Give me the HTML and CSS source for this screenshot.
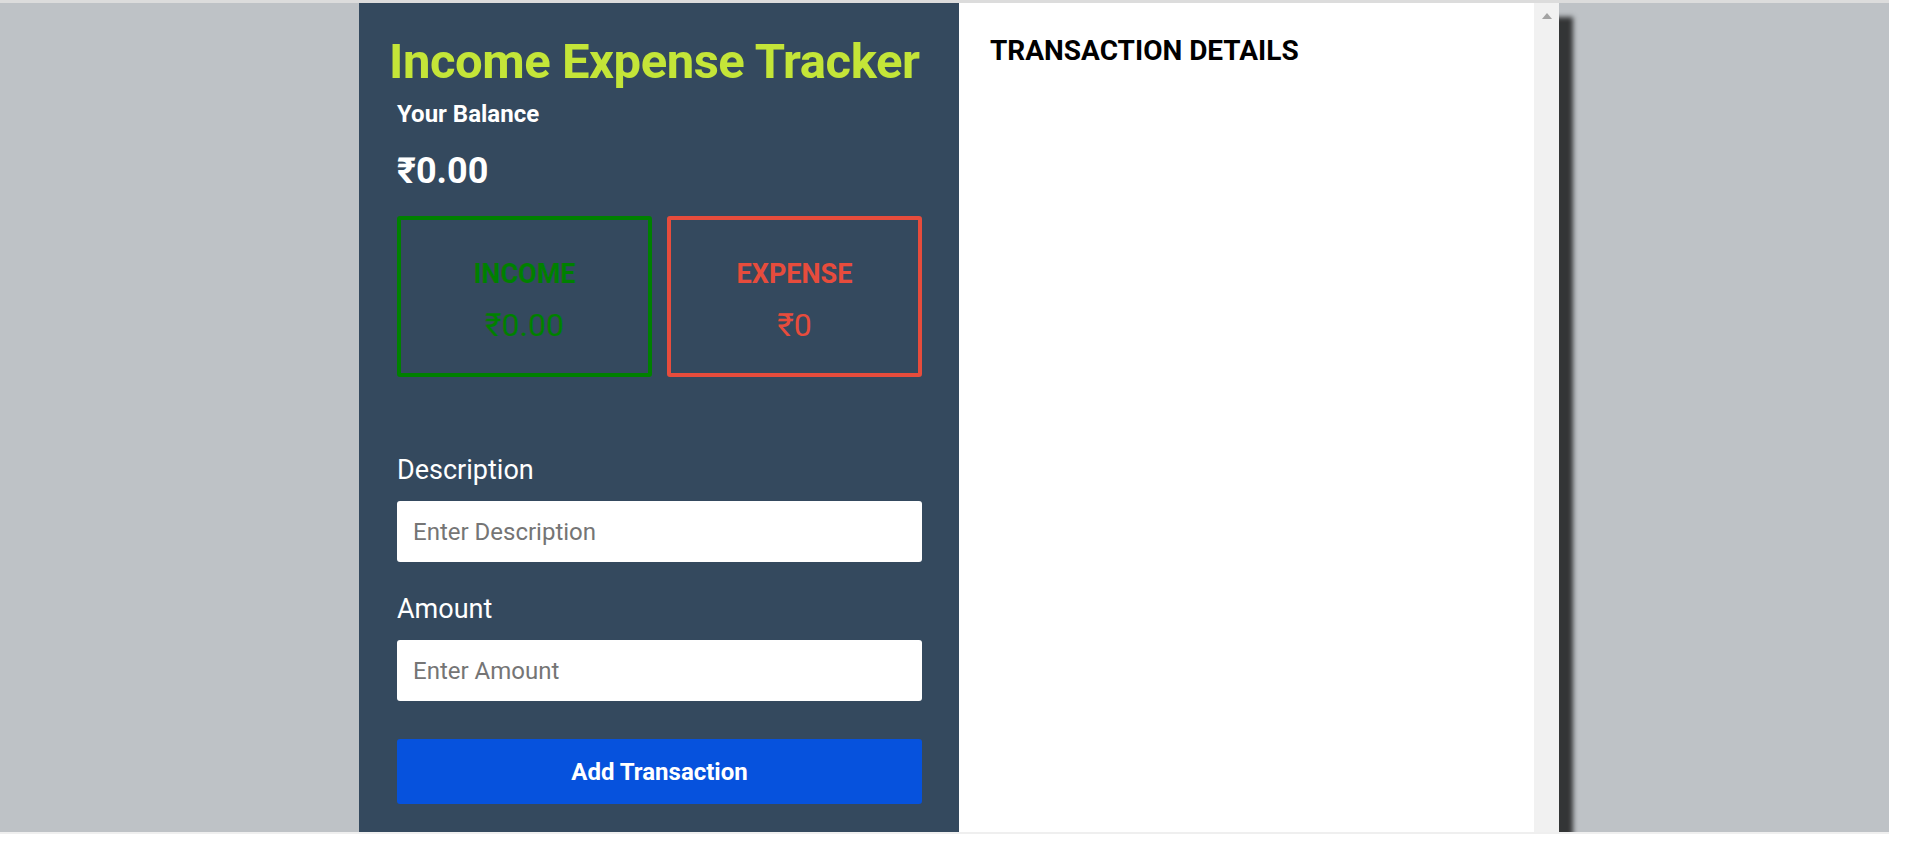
FILE: index.html
```html
<!DOCTYPE html>
<html lang="en">
<head>
<meta charset="utf-8">
<title>Income Expense Tracker</title>
<link rel="stylesheet" href="styles.css">
</head>
<body>
<div class="frame">
  <div class="topline"></div>
  <div class="screen">
    <div class="app">
      <section class="left">
        <h1 class="title">Income Expense Tracker</h1>
        <h3 class="balance-label">Your Balance</h3>
        <div class="balance">₹0.00</div>
        <div class="cards">
          <div class="card card-income">
            <div class="card-label">INCOME</div>
            <div class="card-amount">₹0.00</div>
          </div>
          <div class="card card-expense">
            <div class="card-label">EXPENSE</div>
            <div class="card-amount">₹0</div>
          </div>
        </div>
        <form class="form">
          <label class="field-label field-label-first" for="desc">Description</label>
          <input class="field" id="desc" type="text" placeholder="Enter Description">
          <label class="field-label" for="amt">Amount</label>
          <input class="field" id="amt" type="text" placeholder="Enter Amount">
          <button class="add-btn" type="button">Add Transaction</button>
        </form>
      </section>
      <section class="right">
        <h2 class="details-title">TRANSACTION DETAILS</h2>
      </section>
      <div class="scrollbar"><span class="arrow"></span></div>
    </div>
  </div>
  <div class="bottomline"></div>
</div>
</body>
</html>
```

FILE: styles.css
```css
* { box-sizing: border-box; }

html, body {
  margin: 0;
  padding: 0;
  background: #ffffff;
  font-family: Roboto, "Liberation Sans", Arial, sans-serif;
  overflow: hidden;
}

.frame {
  width: 1889px;
}

.topline {
  height: 3px;
  background: #dcdcdc;
}

.screen {
  height: 829px;
  background: #bec2c6;
  overflow: hidden;
}

.bottomline {
  height: 2px;
  background: #efefef;
}

.app {
  margin-left: 359px;
  width: 1200px;
  height: 829px;
  display: flex;
  box-shadow: 14px 14px 5px rgba(0, 0, 0, 0.73);
}

.left {
  width: 600px;
  flex: none;
  background: #34495e;
  padding: 30px 37px 0 38px;
}

.title {
  margin: 0 0 0 -8px;
  white-space: nowrap;
  font-size: 49px;
  line-height: 58px;
  font-weight: 700;
  letter-spacing: -0.45px;
  color: #c4e538;
}

.balance-label {
  margin: 9px 0 0;
  font-size: 24px;
  line-height: 28px;
  font-weight: 700;
  color: #ffffff;
}

.balance {
  margin-top: 23px;
  font-size: 36px;
  line-height: 41px;
  font-weight: 700;
  color: #ffffff;
}

.cards {
  margin-top: 24px;
  display: grid;
  grid-template-columns: 1fr 1fr;
  gap: 15px;
}

.card {
  height: 161px;
  border: 4px solid;
  border-radius: 3px;
  padding-top: 38px;
  text-align: center;
}

.card-income { border-color: #008000; color: #008000; }
.card-expense { border-color: #e74c3c; color: #e74c3c; }

.card-label {
  font-size: 27px;
  line-height: 32px;
  font-weight: 700;
}

.card-amount {
  margin-top: 16px;
  font-size: 32px;
  line-height: 38px;
  font-weight: 400;
}

.form {
  display: flex;
  flex-direction: column;
  margin: 0;
}

.field-label {
  margin-top: 31px;
  font-size: 27px;
  line-height: 32px;
  color: #ffffff;
}

.field-label-first {
  margin-top: 77px;
}

.field {
  margin-top: 15px;
  height: 61px;
  width: 100%;
  border: none;
  border-radius: 3px;
  padding: 0 16px;
  background: #ffffff;
  font-family: Roboto, "Liberation Sans", Arial, sans-serif;
  font-size: 24px;
  color: #333;
  outline: none;
}

.field::placeholder {
  color: #757575;
  opacity: 1;
}

.add-btn {
  margin-top: 38px;
  height: 65px;
  width: 100%;
  border: none;
  border-radius: 3px;
  padding: 0;
  background: #0652dd;
  color: #ffffff;
  font-family: Roboto, "Liberation Sans", Arial, sans-serif;
  font-size: 24px;
  font-weight: 700;
  cursor: pointer;
}

.right {
  flex: 1;
  background: #ffffff;
  padding: 31px 31px 0;
}

.details-title {
  margin: 0;
  font-size: 28px;
  line-height: 33px;
  font-weight: 700;
  color: #000000;
}

.scrollbar {
  width: 25px;
  flex: none;
  background: #f1f1f1;
  padding-top: 10px;
  display: flex;
  justify-content: center;
  align-items: flex-start;
}

.arrow {
  width: 0;
  height: 0;
  border-left: 5.5px solid transparent;
  border-right: 5.5px solid transparent;
  border-bottom: 6px solid #a3a3a3;
}
```
